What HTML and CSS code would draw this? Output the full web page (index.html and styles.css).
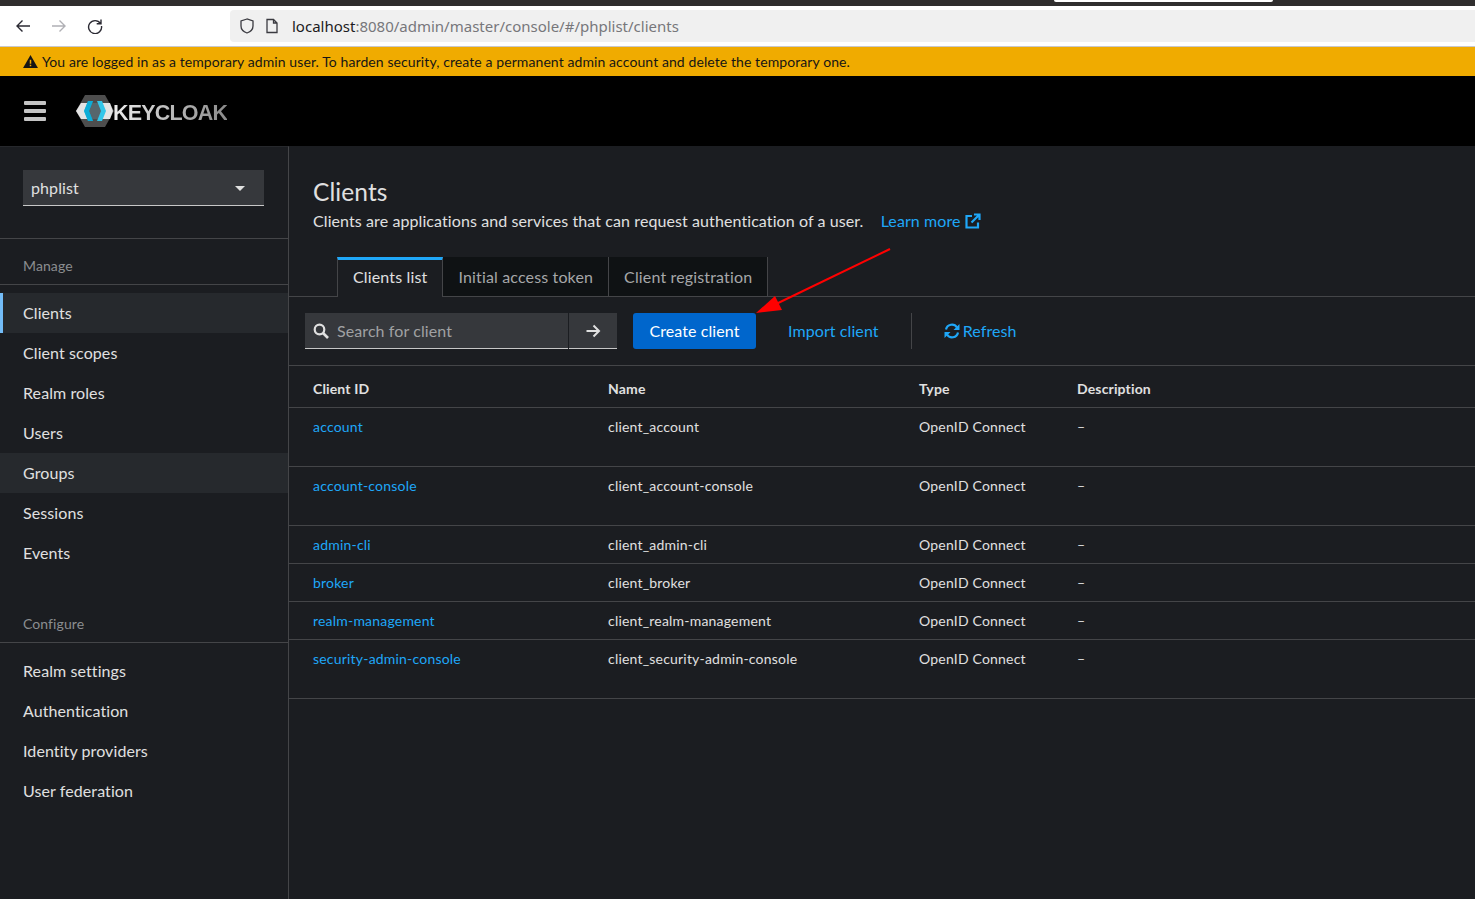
FILE: index.html
```html
<!DOCTYPE html>
<html lang="en">
<head>
    <meta charset="UTF-8">
    <title>Keycloak Administration Console</title>
    <link rel="stylesheet" href="styles.css">
</head>
<body>
    <div class="tabstrip"><div class="tab-open"></div></div>
    <div class="toolbar">
        <div class="nav-btns">
            <svg class="nav-icon" viewBox="0 0 16 16"><path d="M15 8H2M7.5 2.5 2 8l5.500 5.500" fill="none" stroke="#2b2a33" stroke-width="1.400"/></svg>
            <svg class="nav-icon" viewBox="0 0 16 16"><path d="M1 8h13M8.500 2.500 14 8l-5.500 5.500" fill="none" stroke="#b0b0b5" stroke-width="1.400"/></svg>
            <svg class="nav-icon" viewBox="0 0 16 16"><path d="M13.500 5.500A6.500 6.500 0 1 0 14.500 8M14 1.500v4.300H9.700" fill="none" stroke="#2b2a33" stroke-width="1.400"/></svg>
        </div>
        <div class="urlbar">
            <svg class="url-icon" viewBox="0 0 16 16"><path d="M8 1 2 3v5c0 3.500 2.500 5.800 6 7 3.500-1.200 6-3.500 6-7V3z" fill="none" stroke="#3a3a40" stroke-width="1.300"/></svg>
            <svg class="url-icon" viewBox="0 0 16 16"><path d="M3 1.500h6.500L13 5v9.500H3zM9.500 1.500V5H13" fill="none" stroke="#3a3a40" stroke-width="1.300"/></svg>
            <span class="url"><span class="url-host">localhost</span>:8080/admin/master/console/#/phplist/clients</span>
        </div>
    </div>
    <div class="warning">
        <svg class="warning-icon" viewBox="0 0 16 14"><path d="M8 0 16 14H0z" fill="#151515"/><path d="M7.200 5h1.600v4.500H7.200zM7.200 10.500h1.600V12H7.200z" fill="#f0ab00"/></svg>
        <span>You are logged in as a temporary admin user. To harden security, create a permanent admin account and delete the temporary one.</span>
    </div>
    <header class="masthead">
        <div class="burger"><span></span><span></span><span></span></div>
        <div class="logo">
            <svg class="logo-mark" viewBox="0 0 38 32">
                <path d="M9 0h20l9 16-9 16H9L0 16z" fill="#4d4d4d"/>
                <path d="M0 16 5 8h29l3 8-3 8H5z" fill="#e4e4e4"/>
                <path d="M14 8h10l4 8-4 8H14l-4-8z" fill="#56666c"/>
                <path d="M17 6h-5L8 16l4 10h5l-4-10z" fill="#00b8e3"/>
                <path d="M21 6h5l4 10-4 10h-5l4-10z" fill="#33c6e9"/>
                <path d="M12 6h5l-4 10H8zM12 26h5l-4-10H8z" fill="#17a5cf" opacity=".6"/>
            </svg>
            <span class="logo-text">KEYCLOAK</span>
        </div>
    </header>
    <div class="page">
        <aside class="sidebar">
            <div class="realm-wrap">
                <div class="realm-select">phplist<span class="caret"></span></div>
            </div>
            <div class="nav-title nav-title-first">Manage</div>
            <nav class="nav-list">
                <a class="nav-item current">Clients</a>
                <a class="nav-item">Client scopes</a>
                <a class="nav-item">Realm roles</a>
                <a class="nav-item">Users</a>
                <a class="nav-item hovered">Groups</a>
                <a class="nav-item">Sessions</a>
                <a class="nav-item">Events</a>
            </nav>
            <div class="nav-title">Configure</div>
            <nav class="nav-list">
                <a class="nav-item">Realm settings</a>
                <a class="nav-item">Authentication</a>
                <a class="nav-item">Identity providers</a>
                <a class="nav-item">User federation</a>
            </nav>
        </aside>
        <main class="content">
            <section class="page-head">
                <h1>Clients</h1>
                <p>Clients are applications and services that can request authentication of a user.
                    <a class="learn">Learn more
                        <svg class="ext-icon" viewBox="0 0 16 16"><path d="M13 9.500V14.500H1.500V3H7M6.500 9.500 14 2M9 1.500h5.500V7" fill="none" stroke="#1fa7f8" stroke-width="2.200"/></svg>
                    </a>
                </p>
            </section>
            <div class="tabs">
                <div class="tab active">Clients list</div>
                <div class="tab">Initial access token</div>
                <div class="tab">Client registration</div>
            </div>
            <div class="actions">
                <div class="search">
                    <svg class="search-icon" viewBox="0 0 16 16"><circle cx="6.500" cy="6.500" r="4.800" fill="none" stroke="#e0e0e0" stroke-width="2.200"/><path d="m10 10 5 5" stroke="#e0e0e0" stroke-width="2.600"/></svg>
                    <span>Search for client</span>
                </div>
                <div class="search-go">
                    <svg class="go-icon" viewBox="0 0 16 16"><path d="M1.500 8h12M8.500 2.500 14 8l-5.500 5.500" fill="none" stroke="#e0e0e0" stroke-width="2"/></svg>
                </div>
                <button class="btn-primary">Create client</button>
                <a class="btn-link import">Import client</a>
                <div class="sep"></div>
                <a class="btn-link refresh">
                    <svg class="refresh-icon" viewBox="0 0 16 16"><path d="M2 6.500A6 6 0 0 1 13 4.500M14 9.500A6 6 0 0 1 3 11.500" fill="none" stroke="#1fa7f8" stroke-width="2.200"/><path d="M15.500 1v6h-6zM.5 15V9h6z" fill="#1fa7f8"/></svg>
                    Refresh
                </a>
            </div>
            <table class="grid">
                <thead>
                    <tr><th class="c1">Client ID</th><th class="c2">Name</th><th class="c3">Type</th><th>Description</th></tr>
                </thead>
                <tbody>
                    <tr class="tall"><td><a>account</a></td><td>client_account</td><td>OpenID Connect</td><td>–</td></tr>
                    <tr class="tall"><td><a>account-console</a></td><td>client_account-console</td><td>OpenID Connect</td><td>–</td></tr>
                    <tr><td><a>admin-cli</a></td><td>client_admin-cli</td><td>OpenID Connect</td><td>–</td></tr>
                    <tr><td><a>broker</a></td><td>client_broker</td><td>OpenID Connect</td><td>–</td></tr>
                    <tr><td><a>realm-management</a></td><td>client_realm-management</td><td>OpenID Connect</td><td>–</td></tr>
                    <tr class="tall"><td><a>security-admin-console</a></td><td>client_security-admin-console</td><td>OpenID Connect</td><td>–</td></tr>
                </tbody>
            </table>
        </main>
    </div>
    <svg class="arrow" viewBox="0 0 140 70"><path d="M134 2 18 58" stroke="#f00" stroke-width="2" fill="none"/><path d="M0 66 19 49l7 14z" fill="#f00"/></svg>
</body>
</html>
```
FILE: styles.css
```css
* {
    box-sizing: border-box;
}
html, body {
    margin: 0;
    height: 899px;
    overflow: hidden;
}
body {
    font-family: Lato, "Noto Sans", sans-serif;
    font-size: 16px;
    letter-spacing: 0.090px;
    background: #1b1d21;
    color: #e0e0e0;
    position: relative;
}
.tabstrip {
    height: 6px;
    background: #302e2e;
}
.tab-open {
    width: 219px;
    height: 2px;
    margin-left: 1054px;
    background: #fff;
    border-radius: 0 0 3px 3px;
}
.toolbar {
    height: 41px;
    background: #fff;
    border-bottom: 1px solid #c8c8cc;
    display: flex;
    align-items: center;
    padding-left: 15px;
}
.nav-btns {
    display: flex;
    gap: 20px;
    width: 215px;
}
.nav-icon {
    width: 16px;
    height: 16px;
}
.urlbar {
    flex: 1;
    height: 32px;
    background: #f0f0f0;
    border-radius: 4px 0 0 4px;
    display: flex;
    align-items: center;
    padding-left: 9px;
    gap: 7px;
    margin-top: -1px;
}
.url-icon {
    width: 16px;
    height: 16px;
    margin-right: 2px;
}
.url {
    font-family: "Noto Sans", sans-serif;
    font-size: 15px;
    letter-spacing: 0;
    color: #77777b;
    margin-left: 3px;
}
.url-host {
    color: #1c1b22;
}
.warning {
    height: 29px;
    background: #f0ab00;
    color: #151515;
    font-size: 14px;
    display: flex;
    align-items: center;
    padding-left: 23px;
}
.warning-icon {
    width: 15px;
    height: 13px;
    margin-right: 4px;
}
.masthead {
    height: 70px;
    background: #000;
    display: flex;
    align-items: center;
    padding-left: 24px;
}
.burger {
    width: 22px;
    margin-right: 30px;
    display: flex;
    flex-direction: column;
    gap: 4px;
}
.burger span {
    height: 4px;
    background: #c4c4c4;
    border-radius: 1px;
}
.logo {
    display: flex;
    align-items: center;
}
.logo-mark {
    width: 38px;
    height: 32px;
}
.logo-text {
    font-family: "Liberation Sans", sans-serif;
    font-weight: 700;
    font-size: 21.500px;
    letter-spacing: -0.800px;
    margin-left: -1px;
    padding-top: 4px;
    background: linear-gradient(90deg, #ececec, #8a8a8a);
    -webkit-background-clip: text;
    background-clip: text;
    color: transparent;
}
.page {
    display: flex;
    height: 753px;
}
.sidebar {
    width: 289px;
    flex: none;
    background: #1b1d21;
    border-right: 1px solid #444548;
    border-top: 1px solid #26282c;
}
.realm-wrap {
    padding: 23px 24px 32px 23px;
    border-bottom: 1px solid #444548;
}
.realm-select {
    height: 36px;
    background: #36383c;
    border-bottom: 1px solid #c7c7c7;
    padding-left: 8px;
    line-height: 36px;
    color: #e0e0e0;
    position: relative;
}
.caret {
    position: absolute;
    right: 19px;
    top: 16px;
    border-left: 5px solid transparent;
    border-right: 5px solid transparent;
    border-top: 5px solid #e0e0e0;
}
.nav-title {
    font-size: 14px;
    color: #8b8d90;
    padding: 39px 0 9px 23px;
    line-height: 18px;
    border-bottom: 1px solid #444548;
}
.nav-title-first {
    padding-top: 18px;
}
.nav-list {
    display: flex;
    flex-direction: column;
    padding-top: 8px;
    padding-bottom: 3px;
}
.nav-item {
    height: 40px;
    line-height: 40px;
    padding-left: 23px;
    color: #e0e0e0;
}
.nav-item.current {
    background: #26292d;
    box-shadow: inset 3px 0 0 #73bcf7;
}
.nav-item.hovered {
    background: #26292d;
}
.content {
    flex: 1;
    min-width: 0;
}
.page-head {
    padding: 30px 24px 0;
    height: 111px;
    border-top: 1px solid #1b1d21;
}
.page-head h1 {
    margin: 0;
    font-size: 24.500px;
    font-weight: 400;
    line-height: 30px;
    color: #e0e0e0;
}
.page-head p {
    margin: 0;
    line-height: 27px;
}
.learn {
    color: #1fa7f8;
    margin-left: 13px;
}
.ext-icon {
    width: 16px;
    height: 16px;
    vertical-align: -2px;
}
.tabs {
    display: flex;
    padding-left: 48px;
    border-bottom: 1px solid #444548;
    height: 40px;
    letter-spacing: 0.150px;
}
.tab {
    height: 39px;
    padding: 0 15px;
    line-height: 39px;
    background: #0f1214;
    color: #a6a7a9;
    border-right: 1px solid #444548;
}
.tab.active {
    background: #1b1d21;
    color: #e0e0e0;
    border-top: 3px solid #1fa7f8;
    border-left: 1px solid #444548;
    height: 40px;
    line-height: 34px;
}
.actions {
    display: flex;
    align-items: center;
    height: 69px;
    padding-left: 16px;
    border-bottom: 1px solid #444548;
}
.search {
    width: 263px;
    height: 36px;
    background: #36383c;
    border-bottom: 1px solid #c7c7c7;
    display: flex;
    align-items: center;
    padding-left: 8px;
    color: #a0a1a3;
}
.search-icon {
    width: 16px;
    height: 16px;
    margin-right: 8px;
}
.search-go {
    width: 48px;
    height: 36px;
    margin-left: 1px;
    background: #36383c;
    border-bottom: 1px solid #c7c7c7;
    display: flex;
    align-items: center;
    justify-content: center;
}
.go-icon {
    width: 16px;
    height: 16px;
}
.btn-primary {
    width: 123px;
    height: 36px;
    margin-left: 16px;
    padding-bottom: 3px;
    background: #06c;
    color: #fff;
    border: none;
    border-radius: 3px;
    font: inherit;
    letter-spacing: inherit;
}
.btn-link {
    color: #1fa7f8;
    display: flex;
    align-items: center;
    padding-bottom: 2px;
}
.import {
    margin-left: 32px;
}
.sep {
    width: 1px;
    height: 36px;
    background: #444548;
    margin-left: 32px;
}
.refresh {
    margin-left: 32px;
    gap: 3px;
}
.refresh-icon {
    width: 16px;
    height: 16px;
    margin-top: 2px;
}
.grid {
    width: 100%;
    border-collapse: collapse;
    table-layout: fixed;
    font-size: 14px;
    letter-spacing: 0.200px;
}
.grid th {
    text-align: left;
    font-weight: 700;
    letter-spacing: 0.150px;
    height: 41px;
    padding: 5px 0 0 0;
    border-bottom: 1px solid #444548;
}
.grid th.c1 {
    width: 319px;
    padding-left: 24px;
}
.grid th.c2 {
    width: 311px;
}
.grid th.c3 {
    width: 158px;
}
.grid td {
    height: 38px;
    padding: 0;
    vertical-align: top;
    padding-top: 9px;
    line-height: 20px;
    border-bottom: 1px solid #444548;
}
.grid td:first-child {
    padding-left: 24px;
}
.grid tr.tall td {
    height: 59px;
}
.grid a {
    color: #1fa7f8;
}
.arrow {
    position: absolute;
    left: 756px;
    top: 247px;
    width: 140px;
    height: 70px;
}
```
